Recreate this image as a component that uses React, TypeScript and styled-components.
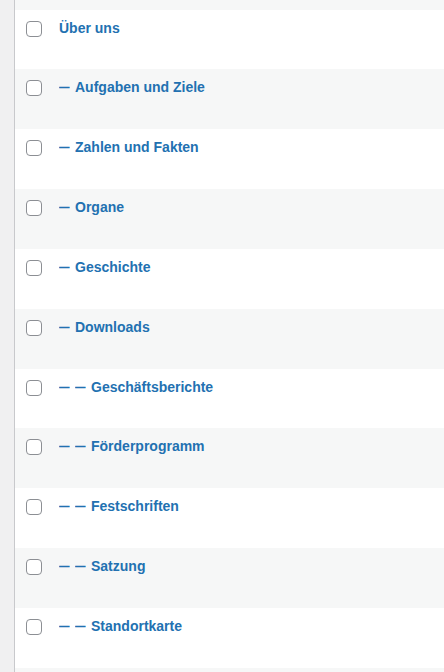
import { FC } from 'react';
import styled, { createGlobalStyle } from 'styled-components';

const GlobalStyle = createGlobalStyle`
  html, body {
    margin: 0;
    padding: 0;
    background: #fff;
    font-family: "Liberation Sans", Arial, sans-serif;
  }
`;

const Page = styled.div`
  display: flex;
  width: 444px;
  height: 672px;
  overflow: hidden;
`;

const Gutter = styled.div`
  flex: 0 0 14px;
  background: #f0f0f1;
  border-right: 1px solid #c8c9cc;
`;

const Table = styled.div`
  flex: 1;
  display: flex;
  flex-direction: column;
`;

const Row = styled.div<{ striped?: boolean; h?: number }>`
  flex: 0 0 ${({ h }) => h ?? 59.85}px;
  display: flex;
  align-items: flex-start;
  box-sizing: border-box;
  padding: 8px 0 0 11px;
  background: ${({ striped }) => (striped ? '#f6f7f7' : '#fff')};
`;

const Checkbox = styled.span`
  flex: 0 0 16px;
  height: 16px;
  margin-top: 3px;
  box-sizing: border-box;
  border: 1px solid #8c8f94;
  border-radius: 4px;
  background: #fff;
`;

const Title = styled.a`
  margin-left: 17px;
  font-size: 14px;
  line-height: 20px;
  font-weight: 700;
  color: #2271b1;
  text-decoration: none;
  white-space: nowrap;
`;

const Dash = styled.span`
  display: inline-block;
  width: 10.5px;
  transform: scaleX(0.75);
  transform-origin: left center;
  margin-right: 5.5px;
`;

const pages = [
  { level: 0, title: 'Über uns' },
  { level: 1, title: 'Aufgaben und Ziele' },
  { level: 1, title: 'Zahlen und Fakten' },
  { level: 1, title: 'Organe' },
  { level: 1, title: 'Geschichte' },
  { level: 1, title: 'Downloads' },
  { level: 2, title: 'Geschäftsberichte' },
  { level: 2, title: 'Förderprogramm' },
  { level: 2, title: 'Festschriften' },
  { level: 2, title: 'Satzung' },
  { level: 2, title: 'Standortkarte' },
];

const App: FC = () => (
  <>
    <GlobalStyle />
    <Page>
      <Gutter />
      <Table>
        <Row striped h={9.5} />
        {pages.map((p, i) => (
          <Row key={p.title} striped={i % 2 === 1}>
            <Checkbox />
            <Title href="#">
              {Array.from({ length: p.level }).map((_, d) => (
                <Dash key={d}>—</Dash>
              ))}
              {p.title}
            </Title>
          </Row>
        ))}
        <Row striped />
      </Table>
    </Page>
  </>
);

export default App;
